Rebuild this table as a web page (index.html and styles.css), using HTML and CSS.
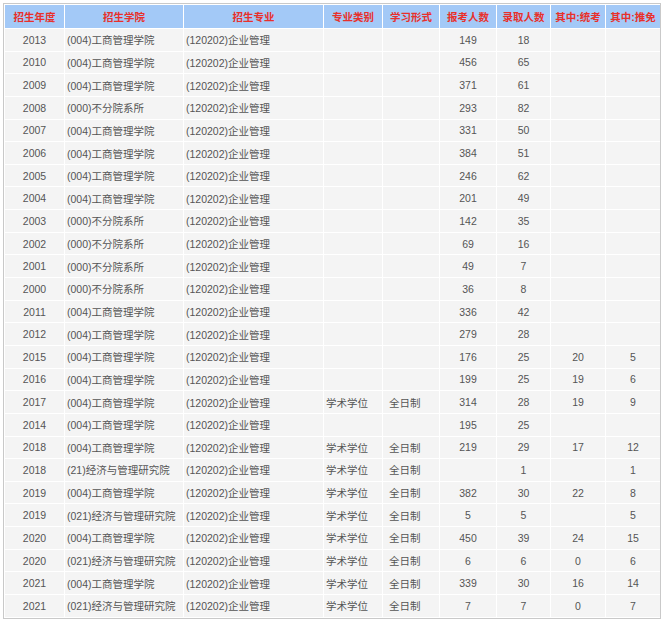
FILE: index.html
```html
<!DOCTYPE html>
<html lang="zh-CN">
<head>
<meta charset="utf-8">
<title>招生数据</title>
<link rel="stylesheet" href="styles.css">
</head>
<body>
<div class="frame">
<table class="data">
<colgroup>
<col class="c1"><col class="c2"><col class="c3"><col class="c4"><col class="c5"><col class="c6"><col class="c7"><col class="c8"><col class="c9">
</colgroup>
<thead>
<tr><th>招生年度</th><th>招生学院</th><th>招生专业</th><th>专业类别</th><th>学习形式</th><th>报考人数</th><th>录取人数</th><th>其中:统考</th><th>其中:推免</th></tr>
</thead>
<tbody>
<tr><td>2013</td><td>(004)工商管理学院</td><td>(120202)企业管理</td><td></td><td></td><td>149</td><td>18</td><td></td><td></td></tr>
<tr><td>2010</td><td>(004)工商管理学院</td><td>(120202)企业管理</td><td></td><td></td><td>456</td><td>65</td><td></td><td></td></tr>
<tr><td>2009</td><td>(004)工商管理学院</td><td>(120202)企业管理</td><td></td><td></td><td>371</td><td>61</td><td></td><td></td></tr>
<tr><td>2008</td><td>(000)不分院系所</td><td>(120202)企业管理</td><td></td><td></td><td>293</td><td>82</td><td></td><td></td></tr>
<tr><td>2007</td><td>(004)工商管理学院</td><td>(120202)企业管理</td><td></td><td></td><td>331</td><td>50</td><td></td><td></td></tr>
<tr><td>2006</td><td>(004)工商管理学院</td><td>(120202)企业管理</td><td></td><td></td><td>384</td><td>51</td><td></td><td></td></tr>
<tr><td>2005</td><td>(004)工商管理学院</td><td>(120202)企业管理</td><td></td><td></td><td>246</td><td>62</td><td></td><td></td></tr>
<tr><td>2004</td><td>(004)工商管理学院</td><td>(120202)企业管理</td><td></td><td></td><td>201</td><td>49</td><td></td><td></td></tr>
<tr><td>2003</td><td>(000)不分院系所</td><td>(120202)企业管理</td><td></td><td></td><td>142</td><td>35</td><td></td><td></td></tr>
<tr><td>2002</td><td>(000)不分院系所</td><td>(120202)企业管理</td><td></td><td></td><td>69</td><td>16</td><td></td><td></td></tr>
<tr><td>2001</td><td>(000)不分院系所</td><td>(120202)企业管理</td><td></td><td></td><td>49</td><td>7</td><td></td><td></td></tr>
<tr><td>2000</td><td>(000)不分院系所</td><td>(120202)企业管理</td><td></td><td></td><td>36</td><td>8</td><td></td><td></td></tr>
<tr><td>2011</td><td>(004)工商管理学院</td><td>(120202)企业管理</td><td></td><td></td><td>336</td><td>42</td><td></td><td></td></tr>
<tr><td>2012</td><td>(004)工商管理学院</td><td>(120202)企业管理</td><td></td><td></td><td>279</td><td>28</td><td></td><td></td></tr>
<tr><td>2015</td><td>(004)工商管理学院</td><td>(120202)企业管理</td><td></td><td></td><td>176</td><td>25</td><td>20</td><td>5</td></tr>
<tr><td>2016</td><td>(004)工商管理学院</td><td>(120202)企业管理</td><td></td><td></td><td>199</td><td>25</td><td>19</td><td>6</td></tr>
<tr><td>2017</td><td>(004)工商管理学院</td><td>(120202)企业管理</td><td>学术学位</td><td>全日制</td><td>314</td><td>28</td><td>19</td><td>9</td></tr>
<tr><td>2014</td><td>(004)工商管理学院</td><td>(120202)企业管理</td><td></td><td></td><td>195</td><td>25</td><td></td><td></td></tr>
<tr><td>2018</td><td>(004)工商管理学院</td><td>(120202)企业管理</td><td>学术学位</td><td>全日制</td><td>219</td><td>29</td><td>17</td><td>12</td></tr>
<tr><td>2018</td><td>(21)经济与管理研究院</td><td>(120202)企业管理</td><td>学术学位</td><td>全日制</td><td></td><td>1</td><td></td><td>1</td></tr>
<tr><td>2019</td><td>(004)工商管理学院</td><td>(120202)企业管理</td><td>学术学位</td><td>全日制</td><td>382</td><td>30</td><td>22</td><td>8</td></tr>
<tr><td>2019</td><td>(021)经济与管理研究院</td><td>(120202)企业管理</td><td>学术学位</td><td>全日制</td><td>5</td><td>5</td><td></td><td>5</td></tr>
<tr><td>2020</td><td>(004)工商管理学院</td><td>(120202)企业管理</td><td>学术学位</td><td>全日制</td><td>450</td><td>39</td><td>24</td><td>15</td></tr>
<tr><td>2020</td><td>(021)经济与管理研究院</td><td>(120202)企业管理</td><td>学术学位</td><td>全日制</td><td>6</td><td>6</td><td>0</td><td>6</td></tr>
<tr><td>2021</td><td>(004)工商管理学院</td><td>(120202)企业管理</td><td>学术学位</td><td>全日制</td><td>339</td><td>30</td><td>16</td><td>14</td></tr>
<tr><td>2021</td><td>(021)经济与管理研究院</td><td>(120202)企业管理</td><td>学术学位</td><td>全日制</td><td>7</td><td>7</td><td>0</td><td>7</td></tr>
</tbody>
</table>
</div>
</body>
</html>
```

FILE: styles.css
```css
html, body {
  margin: 0;
  padding: 0;
  background: #ffffff;
}

.frame {
  margin: 3px 0 0 3px;
  width: 656px;
  border: 1px solid #c9c9c9;
  background: #ffffff;
}

.data {
  border-collapse: separate;
  border-spacing: 1px;
  table-layout: fixed;
  width: 656px;
  font-family: "Liberation Sans", "Noto Sans CJK SC", sans-serif;
  font-size: 10.5px;
  color: #555555;
}

.c1 { width: 59px; }
.c2 { width: 118px; }
.c3 { width: 139px; }
.c4 { width: 58px; }
.c5 { width: 56px; }
.c6 { width: 56px; }
.c7 { width: 53px; }
.c8 { width: 54px; }
.c9 { width: 54px; }

.data th {
  background: #a3c9f7;
  color: #e8302b;
  font-weight: bold;
  height: 23px;
  padding: 0;
  text-align: center;
  white-space: nowrap;
}

.data td {
  background: #f4f4f4;
  height: 21.65px;
  padding: 0;
  text-align: center;
  white-space: nowrap;
  box-sizing: border-box;
}

.data td:nth-child(2),
.data td:nth-child(3),
.data td:nth-child(4) {
  text-align: left;
  padding-left: 2px;
}

.data td:nth-child(5) {
  text-align: left;
  padding-left: 6px;
}
```
